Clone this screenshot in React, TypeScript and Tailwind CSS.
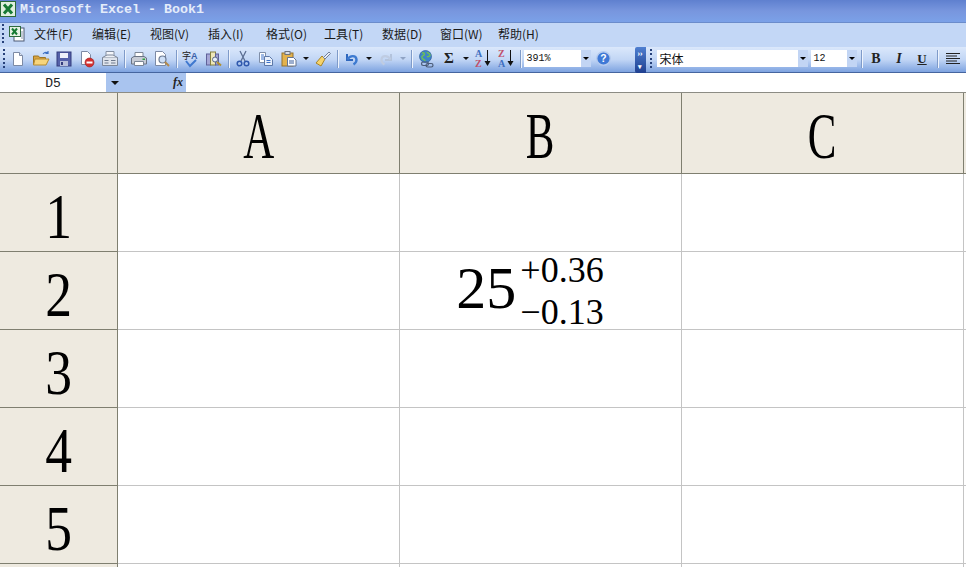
import type { ReactNode } from "react";

const MENUS = ["文件(F)", "编辑(E)", "视图(V)", "插入(I)", "格式(O)", "工具(T)", "数据(D)", "窗口(W)", "帮助(H)"];
const COLUMNS = ["A", "B", "C"];
const ROWS = [1, 2, 3, 4, 5, 6];

function Icon({ children }: { children: ReactNode }) {
  return (
    <svg width="18" height="18" viewBox="0 0 18 18" fill="none">
      {children}
    </svg>
  );
}

function Btn({ children, w = "w-[23px]" }: { children: ReactNode; w?: string }) {
  return <div className={`${w} flex h-full shrink-0 items-center justify-center`}>{children}</div>;
}

function Caret({ muted }: { muted?: boolean }) {
  return (
    <div className="flex h-full w-[11px] shrink-0 items-center justify-center">
      <div
        className={`h-0 w-0 border-x-[3px] border-t-[3px] border-x-transparent ${muted ? "border-t-[#8fa3c4]" : "border-t-[#111]"}`}
      />
    </div>
  );
}

function Sep() {
  return <div className="mr-[3px] ml-[2px] h-[18px] w-[1px] shrink-0 bg-[#7f9bc9] shadow-[1px_0_0_#eef4fd]" />;
}

function Grip() {
  return (
    <div className="flex h-[19px] w-[3px] shrink-0 flex-col justify-between">
      {[0, 1, 2, 3, 4].map((i) => (
        <div key={i} className="h-[2px] w-[2px] bg-[#27417a]" />
      ))}
    </div>
  );
}

function Combo({ w, text, cjk }: { w: string; text: string; cjk?: boolean }) {
  return (
    <div className={`${w} flex h-[17px] shrink-0 items-center justify-between bg-white`}>
      <span
        className={`pl-[3px] leading-none text-[#111] ${cjk ? "font-['Noto_Sans_CJK_SC',sans-serif] text-[12px]" : "font-['Liberation_Mono',monospace] text-[10px]"}`}
      >
        {text}
      </span>
      <div className="flex h-full w-[11px] items-center justify-center border-l border-white bg-[#c2d5f4]">
        <div className="h-0 w-0 border-x-[3px] border-t-[3px] border-x-transparent border-t-black" />
      </div>
    </div>
  );
}

const NewIcon = (
  <Icon>
    <path d="M4.500 2.500h6l3 3v10h-9z" fill="#fff" stroke="#7c8aa5" />
    <path d="M10.500 2.500v3h3" fill="#dfe6f2" stroke="#7c8aa5" />
  </Icon>
);
const OpenIcon = (
  <Icon>
    <path d="M1.500 6h5l1 1.500h6v7h-12z" fill="#d9a441" stroke="#9c7425" />
    <path d="M3 9h14l-3 6H1.500z" fill="#f7d57c" stroke="#b58a30" />
    <path d="M11 4c1.500-2 3.500-2 5-1M16 1v2.500h-2.500" stroke="#3d70c4" strokeWidth="1.200" />
  </Icon>
);
const SaveIcon = (
  <Icon>
    <rect x="2" y="2" width="14" height="14" fill="#5561a9" stroke="#353c7c" />
    <rect x="5" y="3" width="8" height="5" fill="#eef1fa" />
    <rect x="5" y="11" width="8" height="5" fill="#b9c0dc" />
    <rect x="6" y="12" width="2" height="3" fill="#353c7c" />
  </Icon>
);
const PermissionIcon = (
  <Icon>
    <path d="M3.500 1.500h6l3 3v10h-9z" fill="#fff" stroke="#7c8aa5" />
    <circle cx="11.500" cy="12.500" r="4.500" fill="#d32f2f" stroke="#9c1c1c" strokeWidth="0.600" />
    <rect x="8.500" y="11.500" width="6" height="2" fill="#fff" />
  </Icon>
);
const MailIcon = (
  <Icon>
    <path d="M5 6V1.500h8V6" fill="#f4f6fa" stroke="#8490a3" />
    <path d="M1.500 7.500h15v8h-15z" fill="#dfe4ec" stroke="#7c8799" />
    <path d="M1.500 7.500 6 5h6l4.500 2.500" fill="#eef1f6" stroke="#7c8799" />
    <path d="M3.500 10.500h4M3.500 13h4M10 10.500h4.500M10 13h4.500" stroke="#6e7a8f" />
  </Icon>
);
const PrintIcon = (
  <Icon>
    <path d="M5 7V2.500h8V7" fill="#fff" stroke="#7b8696" />
    <path d="M1.500 8 4 6.500h10L16.500 8v6h-15z" fill="#c7ccd6" stroke="#6a7485" />
    <path d="M4.500 11.500h9v4h-9z" fill="#fff" stroke="#7b8696" />
    <rect x="12.500" y="8.500" width="2.500" height="1.500" fill="#2ea043" />
  </Icon>
);
const PreviewIcon = (
  <Icon>
    <path d="M2.500 1.500h7l3 3v11h-10z" fill="#fff" stroke="#7c8aa5" />
    <circle cx="9.500" cy="9.500" r="3.500" fill="#cfe0f7" stroke="#6b7a93" strokeWidth="1.200" />
    <path d="m12 12 4 4" stroke="#b48a4a" strokeWidth="2" />
  </Icon>
);
const SpellIcon = (
  <Icon>
    <text x="0" y="9" fontSize="9" fontFamily="Noto Sans CJK SC, sans-serif" fill="#222">
      字
    </text>
    <text x="9" y="9" fontSize="9" fontWeight="700" fontFamily="Liberation Sans, sans-serif" fill="#3a5fa8">
      A
    </text>
    <path d="m4 11 4 5 6-6" stroke="#3f78cf" strokeWidth="2" />
  </Icon>
);
const ResearchIcon = (
  <Icon>
    <rect x="1.500" y="4" width="4" height="11" fill="#a5a6d6" stroke="#5f6199" />
    <rect x="5.500" y="2" width="5" height="13" fill="#eee7b8" stroke="#85803f" />
    <rect x="10.500" y="4" width="3" height="11" fill="#9ea1cf" stroke="#5f6199" />
    <circle cx="10" cy="9.500" r="2.500" fill="#e6eefb" stroke="#5c6b86" />
    <path d="m12 12 4 3.500" stroke="#b09030" strokeWidth="2" />
  </Icon>
);
const CutIcon = (
  <Icon>
    <path d="m6 1 5 10M12 1 7 11" stroke="#5c6f92" strokeWidth="1.300" />
    <circle cx="5.500" cy="13.500" r="2.300" stroke="#2f58ad" strokeWidth="1.500" />
    <circle cx="12.500" cy="13.500" r="2.300" stroke="#2f58ad" strokeWidth="1.500" />
  </Icon>
);
const CopyIcon = (
  <Icon>
    <path d="M2.500 2.500h6v10h-6z" fill="#fff" stroke="#7f8ea8" />
    <path d="M4 5h3M4 7h3M4 9h3" stroke="#3e72c8" />
    <path d="M7.500 6.500h5l3 3v6h-8z" fill="#e9f0fb" stroke="#5d78a8" />
    <path d="M9.500 10.500h4M9.500 12.500h4" stroke="#3e72c8" />
  </Icon>
);
const PasteIcon = (
  <Icon>
    <rect x="2" y="3" width="11" height="13" fill="#e3b24d" stroke="#94702a" />
    <rect x="5" y="1.500" width="5" height="3" fill="#d9dde6" stroke="#6b7280" />
    <path d="M7.500 7.500h6l2.500 2.500v6H7.500z" fill="#fff" stroke="#66748f" />
    <path d="M9 11h5M9 13h5" stroke="#3b5f9e" />
  </Icon>
);
const BrushIcon = (
  <Icon>
    <path d="m8 6 3 3-4 7-5-3z" fill="#f6d36b" stroke="#a88427" />
    <path d="m9.500 7.500 5.500-5.500 1.500 1.500-5.500 5.500z" fill="#e8edf6" stroke="#6f7f9c" />
  </Icon>
);
const UndoIcon = (
  <Icon>
    <path d="M4 4v6h6" fill="none" stroke="#2f67bd" strokeWidth="2" />
    <path d="M4.500 9.500C7 5 13 5 13.500 9.500c.3 2.500-1.500 4-3 5" stroke="#3d7ad0" strokeWidth="2.400" />
  </Icon>
);
const RedoIcon = (
  <Icon>
    <path d="M14 4v6H8" fill="none" stroke="#b3c3dc" strokeWidth="2" />
    <path d="M13.500 9.500C11 5 5 5 4.500 9.500c-.3 2.500 1.500 4 3 5" stroke="#bfcce2" strokeWidth="2.200" />
  </Icon>
);
const LinkIcon = (
  <Icon>
    <circle cx="8.500" cy="6.500" r="6" fill="#3f83c9" stroke="#2b5c99" strokeWidth="0.700" />
    <path d="M5 3c2-1 3 1 2 2S4 6 5 8s3 1 3 3M10 2c1 2 3 1 3 3s-2 1-3 2" stroke="#6cbf58" strokeWidth="1.500" />
    <rect x="4.500" y="12" width="7" height="3.500" rx="1.700" stroke="#4c5c78" strokeWidth="1.200" />
    <rect x="9" y="13.500" width="7" height="3.500" rx="1.700" stroke="#4c5c78" strokeWidth="1.200" />
  </Icon>
);
const HelpIcon = (
  <svg width="15" height="15" viewBox="0 0 16 16">
    <circle cx="8" cy="8" r="7.200" fill="#3f79d6" stroke="#b6cbee" strokeWidth="1.400" />
    <text x="8" y="12" fontSize="11" fontWeight="700" textAnchor="middle" fontFamily="Liberation Sans, sans-serif" fill="#fff">
      ?
    </text>
  </svg>
);
const AlignIcon = (
  <svg width="16" height="14" viewBox="0 0 16 14">
    <path d="M1 1.500h14M1 4h11M1 6.500h14M1 9h11M1 11.500h14" stroke="#222" />
  </svg>
);

function SortIcon({ top, bottom, topColor, bottomColor }: { top: string; bottom: string; topColor: string; bottomColor: string }) {
  return (
    <div className="flex items-center gap-[2px]">
      <div className="flex flex-col font-['Liberation_Serif',serif] text-[10px] leading-[10px] font-bold">
        <span className={topColor}>{top}</span>
        <span className={bottomColor}>{bottom}</span>
      </div>
      <svg width="7" height="17" viewBox="0 0 7 17">
        <path d="M3.500 0v13" stroke="#111" />
        <path d="M0.500 11h6l-3 5z" fill="#111" />
      </svg>
    </div>
  );
}

function ExcelLogo() {
  return (
    <svg width="16" height="16" viewBox="0 0 16 16">
      <rect x="0.500" y="0.500" width="15" height="15" fill="#dff0de" stroke="#2c6a3a" />
      <path d="M4 3.500 12 12.500M12 3.500 4 12.500" stroke="#167a33" strokeWidth="3" />
    </svg>
  );
}

function MenuIcon() {
  return (
    <svg width="18" height="18" viewBox="0 0 18 18">
      <rect x="6" y="3" width="10" height="13" fill="#fff" stroke="#4c5a74" />
      <rect x="1.500" y="1.500" width="11" height="10" fill="#e7f2e5" stroke="#2f6b3f" />
      <path d="m4 3.500 5 6M9 3.500l-5 6" stroke="#167a33" strokeWidth="2" />
      <path d="M14 6v8" stroke="#8796b1" />
    </svg>
  );
}

function Toolbar() {
  return (
    <div className="flex h-[26px] shrink-0 items-center border-b border-[#45659f] bg-gradient-to-b from-[#dbe8fb] via-[#c2d6f5] to-[#7ea3e0] pb-[2px]">
      <div className="w-[3px] shrink-0" />
      <Grip />
      <div className="w-[0.5px] shrink-0" />
      <Btn>{NewIcon}</Btn>
      <Btn>{OpenIcon}</Btn>
      <Btn>{SaveIcon}</Btn>
      <Btn>{PermissionIcon}</Btn>
      <Btn>{MailIcon}</Btn>
      <Sep />
      <Btn>{PrintIcon}</Btn>
      <Btn>{PreviewIcon}</Btn>
      <Sep />
      <Btn>{SpellIcon}</Btn>
      <Btn>{ResearchIcon}</Btn>
      <Sep />
      <Btn>{CutIcon}</Btn>
      <Btn>{CopyIcon}</Btn>
      <Btn>{PasteIcon}</Btn>
      <Caret />
      <Btn>{BrushIcon}</Btn>
      <Sep />
      <Btn>{UndoIcon}</Btn>
      <Caret />
      <Btn>{RedoIcon}</Btn>
      <Caret muted />
      <Sep />
      <Btn>{LinkIcon}</Btn>
      <Btn>
        <span className="font-['Liberation_Serif',serif] text-[15px] font-bold text-[#222]">Σ</span>
      </Btn>
      <Caret />
      <Btn>
        <SortIcon top="A" bottom="Z" topColor="text-[#3f6fc0]" bottomColor="text-[#c0506a]" />
      </Btn>
      <Btn>
        <SortIcon top="Z" bottom="A" topColor="text-[#c0506a]" bottomColor="text-[#3f6fc0]" />
      </Btn>
      <Sep />
      <Combo w="w-[67px]" text="391%" />
      <Btn w="w-[26px]">{HelpIcon}</Btn>
      <div className="mt-[2px] ml-[18px] flex h-[26px] w-[11px] shrink-0 flex-col items-center justify-between rounded-l-[2px] bg-gradient-to-b from-[#4f7fd0] to-[#1f3f8f] py-[3px] text-[7px] leading-none font-bold text-white">
        <span>››</span>
        <span>▾</span>
      </div>
      <div className="ml-[4px]">
        <Grip />
      </div>
      <div className="w-[4px] shrink-0" />
      <Combo w="w-[151px]" text="宋体" cjk />
      <div className="w-[3px] shrink-0" />
      <Combo w="w-[46px]" text="12" />
      <div className="w-[2px] shrink-0" />
      <Sep />
      <Btn>
        <span className="font-['Liberation_Serif',serif] text-[14px] font-bold text-[#222]">B</span>
      </Btn>
      <Btn>
        <span className="font-['Liberation_Serif',serif] text-[14px] font-bold text-[#222] italic">I</span>
      </Btn>
      <Btn>
        <span className="font-['Liberation_Serif',serif] text-[13px] font-bold text-[#222] underline">U</span>
      </Btn>
      <div className="w-[1px] shrink-0" />
      <Sep />
      <Btn w="w-[25px]">{AlignIcon}</Btn>
    </div>
  );
}

function FormulaBar() {
  return (
    <div className="flex h-[19px] shrink-0 bg-white">
      <div className="flex w-[106px] items-center justify-center pt-[2px] font-['Liberation_Mono',monospace] text-[13px] text-[#222]">
        D5
      </div>
      <div className="flex w-[80px] items-center justify-between bg-[#a9c4ef] pr-[3px] pb-[2px] pl-[5px]">
        <div className="mt-[2px] h-0 w-0 border-x-[4px] border-t-[4px] border-x-transparent border-t-[#111]" />
        <span className="font-['Liberation_Serif',serif] text-[12px] font-bold text-[#222] italic">fx</span>
      </div>
    </div>
  );
}

function Tolerance() {
  return (
    <div className="mr-[21px] flex items-center font-['Liberation_Serif',serif] text-black">
      <span className="mb-[6px] text-[60px] leading-none">25</span>
      <div className="ml-[4px] flex flex-col text-[36px] leading-[42px]">
        <span>+0.36</span>
        <span>−0.13</span>
      </div>
    </div>
  );
}

function HeaderLabel({ children, size }: { children: ReactNode; size: string }) {
  return <span className={`${size} font-['Liberation_Serif',serif] leading-none text-black`}>{children}</span>;
}

export default function App() {
  return (
    <div className="flex h-[567px] w-[966px] flex-col overflow-hidden bg-white">
      <div className="flex h-[22px] shrink-0 items-start bg-gradient-to-b from-[#5f80cf] via-[#7896de] to-[#7ba1e8] pt-[1px]">
        <ExcelLogo />
        <span className="ml-[4px] font-['Liberation_Mono',monospace] text-[13.33px] leading-[17px] font-bold text-[#e4ecfa]">
          Microsoft Excel - Book1
        </span>
      </div>
      <div className="flex h-[25px] shrink-0 items-center border-t border-[#6b8ccb] bg-[#c3d7f6] pb-[3px] pl-[2px]">
        <Grip />
        <div className="ml-[3px] w-[26px] shrink-0">
          <MenuIcon />
        </div>
        {MENUS.map((menu) => (
          <span
            key={menu}
            className="w-[58px] shrink-0 font-['Noto_Sans_CJK_SC',sans-serif] text-[12px] leading-none text-[#1a1a1a]"
          >
            {menu}
          </span>
        ))}
      </div>
      <Toolbar />
      <FormulaBar />
      <div className="h-[1px] shrink-0 bg-[#8c8c84]" />
      <div className="grid grid-cols-[118px_282px_282px_282px_2px] grid-rows-[81px_repeat(6,78px)]">
        <div className="border-r border-b border-[#7f7f70] bg-[#eeeae0]" />
        {COLUMNS.map((col) => (
          <div
            key={col}
            className="flex items-center justify-center overflow-hidden border-r border-b border-[#7f7f70] bg-[#eeeae0] pt-[5px]"
          >
            <div className="scale-x-[0.65]">
              <HeaderLabel size="text-[66px]">{col}</HeaderLabel>
            </div>
          </div>
        ))}
        <div className="border-b border-[#7f7f70] bg-[#eeeae0]" />
        {ROWS.map((row) => [
          <div
            key={`h${row}`}
            className="flex items-center justify-center overflow-hidden border-r border-b border-[#7f7f70] bg-[#eeeae0] pt-[9px]"
          >
            {row < 6 ? (
              <div className="scale-x-[0.85]">
                <HeaderLabel size="text-[63px]">{row}</HeaderLabel>
              </div>
            ) : null}
          </div>,
          ...COLUMNS.map((col) => (
            <div
              key={`${col}${row}`}
              className="flex items-center justify-center border-r border-b border-[#c4c4c4] bg-white"
            >
              {col === "B" && row === 2 ? <Tolerance /> : null}
            </div>
          )),
          <div key={`d${row}`} className="border-b border-[#c4c4c4] bg-white" />,
        ])}
      </div>
    </div>
  );
}
